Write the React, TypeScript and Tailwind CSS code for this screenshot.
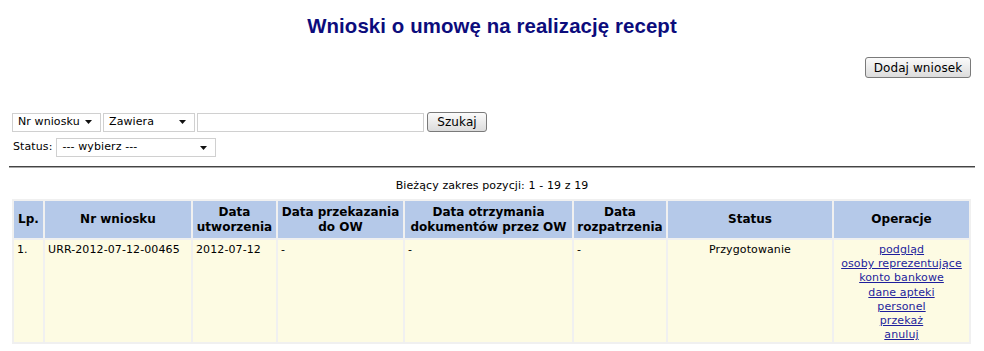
import { ReactNode } from "react";

const COLUMNS = [
    { label: ["Lp."], width: "w-[29px]" },
    { label: ["Nr wniosku"], width: "w-[146px]" },
    { label: ["Data", "utworzenia"], width: "w-[83px]" },
    { label: ["Data przekazania", "do OW"], width: "w-[125px]" },
    { label: ["Data otrzymania", "dokumentów przez OW"], width: "w-[167px]" },
    { label: ["Data", "rozpatrzenia"], width: "w-[92px]" },
    { label: ["Status"], width: "w-[164px]" },
    { label: ["Operacje"], width: "w-[135px]" },
];

const OPERATIONS = ["podgląd", "osoby reprezentujące", "konto bankowe", "dane apteki", "personel", "przekaż", "anuluj"];

function Select({ value, className }: { value: string; className: string }) {
    return (
        <div className={`flex items-center justify-between h-[19px] border border-[#d0d0d0] bg-white pl-[5px] pr-[8px] ${className}`}>
            <span>{value}</span>
            <svg width="7" height="4" viewBox="0 0 7 4">
                <path d="M0 0h7L3.5 4z" fill="#111" />
            </svg>
        </div>
    );
}

function Button({ children, className }: { children: ReactNode; className: string }) {
    return (
        <button className={`flex items-center justify-center border border-[#7a7a7a] rounded-[3px] bg-gradient-to-b from-[#fbfbfb] to-[#dcdcdc] text-[12px] text-black ${className}`}>
            {children}
        </button>
    );
}

export default function App() {
    return (
        <div className="w-[984px] h-[351px] bg-white font-['DejaVu_Sans',sans-serif] text-[11px] tracking-[0.1px] text-black overflow-hidden">
            <h1 className="pt-[14px] text-center font-['Liberation_Sans',sans-serif] font-bold text-[20.4px] leading-[24px] text-[#0c0c7c]">
                Wnioski o umowę na realizację recept
            </h1>

            <div className="flex justify-end pr-[13px] mt-[19px]">
                <Button className="w-[106px] h-[21px]">Dodaj wniosek</Button>
            </div>

            <div className="mt-[34px] pl-[12px] flex items-center gap-[2px] h-[20px]">
                <Select value="Nr wniosku" className="w-[89px]" />
                <Select value="Zawiera" className="w-[92px]" />
                <div className="w-[227px] h-[19px] border border-[#d0d0d0] bg-white" />
                <Button className="ml-[1px] w-[60px] h-[20px]">Szukaj</Button>
            </div>

            <div className="mt-[6px] pl-[13px] flex items-center gap-[4px] h-[19px]">
                <span>Status:</span>
                <Select value="--- wybierz ---" className="w-[160px]" />
            </div>

            <div className="mt-[9px] mx-[9px] h-[2px] border-t border-[#444] bg-[#a8a8a8]" />

            <p className="mt-[11px] text-center leading-[14px]">Bieżący zakres pozycji: 1 - 19 z 19</p>

            <table className="mt-[6px] ml-[12px] border-separate border-spacing-[2px] bg-[#f0f0f0] table-fixed">
                <thead>
                    <tr>
                        {COLUMNS.map((c) => (
                            <th key={c.label[0]} className={`${c.width} h-[37px] p-0 bg-[#b5c9e9] text-[12px] leading-[15px] tracking-normal font-bold text-center align-middle`}>
                                {c.label.map((l) => (
                                    <div key={l}>{l}</div>
                                ))}
                            </th>
                        ))}
                    </tr>
                </thead>
                <tbody>
                    <tr className="bg-[#fdfbe3] align-top leading-[14px]">
                        <td className="h-[102px] pl-[3px] pt-[3px]">1.</td>
                        <td className="pl-[3px] pt-[3px]">URR-2012-07-12-00465</td>
                        <td className="pl-[3px] pt-[3px]">2012-07-12</td>
                        <td className="pl-[3px] pt-[3px]">-</td>
                        <td className="pl-[3px] pt-[3px]">-</td>
                        <td className="pl-[3px] pt-[3px]">-</td>
                        <td className="pt-[3px] text-center">Przygotowanie</td>
                        <td className="pt-[3px] text-center leading-[14.2px]">
                            {OPERATIONS.map((op) => (
                                <div key={op}>
                                    <a href="#" className="text-[#1e1e9c] underline">
                                        {op}
                                    </a>
                                </div>
                            ))}
                        </td>
                    </tr>
                </tbody>
            </table>
        </div>
    );
}
